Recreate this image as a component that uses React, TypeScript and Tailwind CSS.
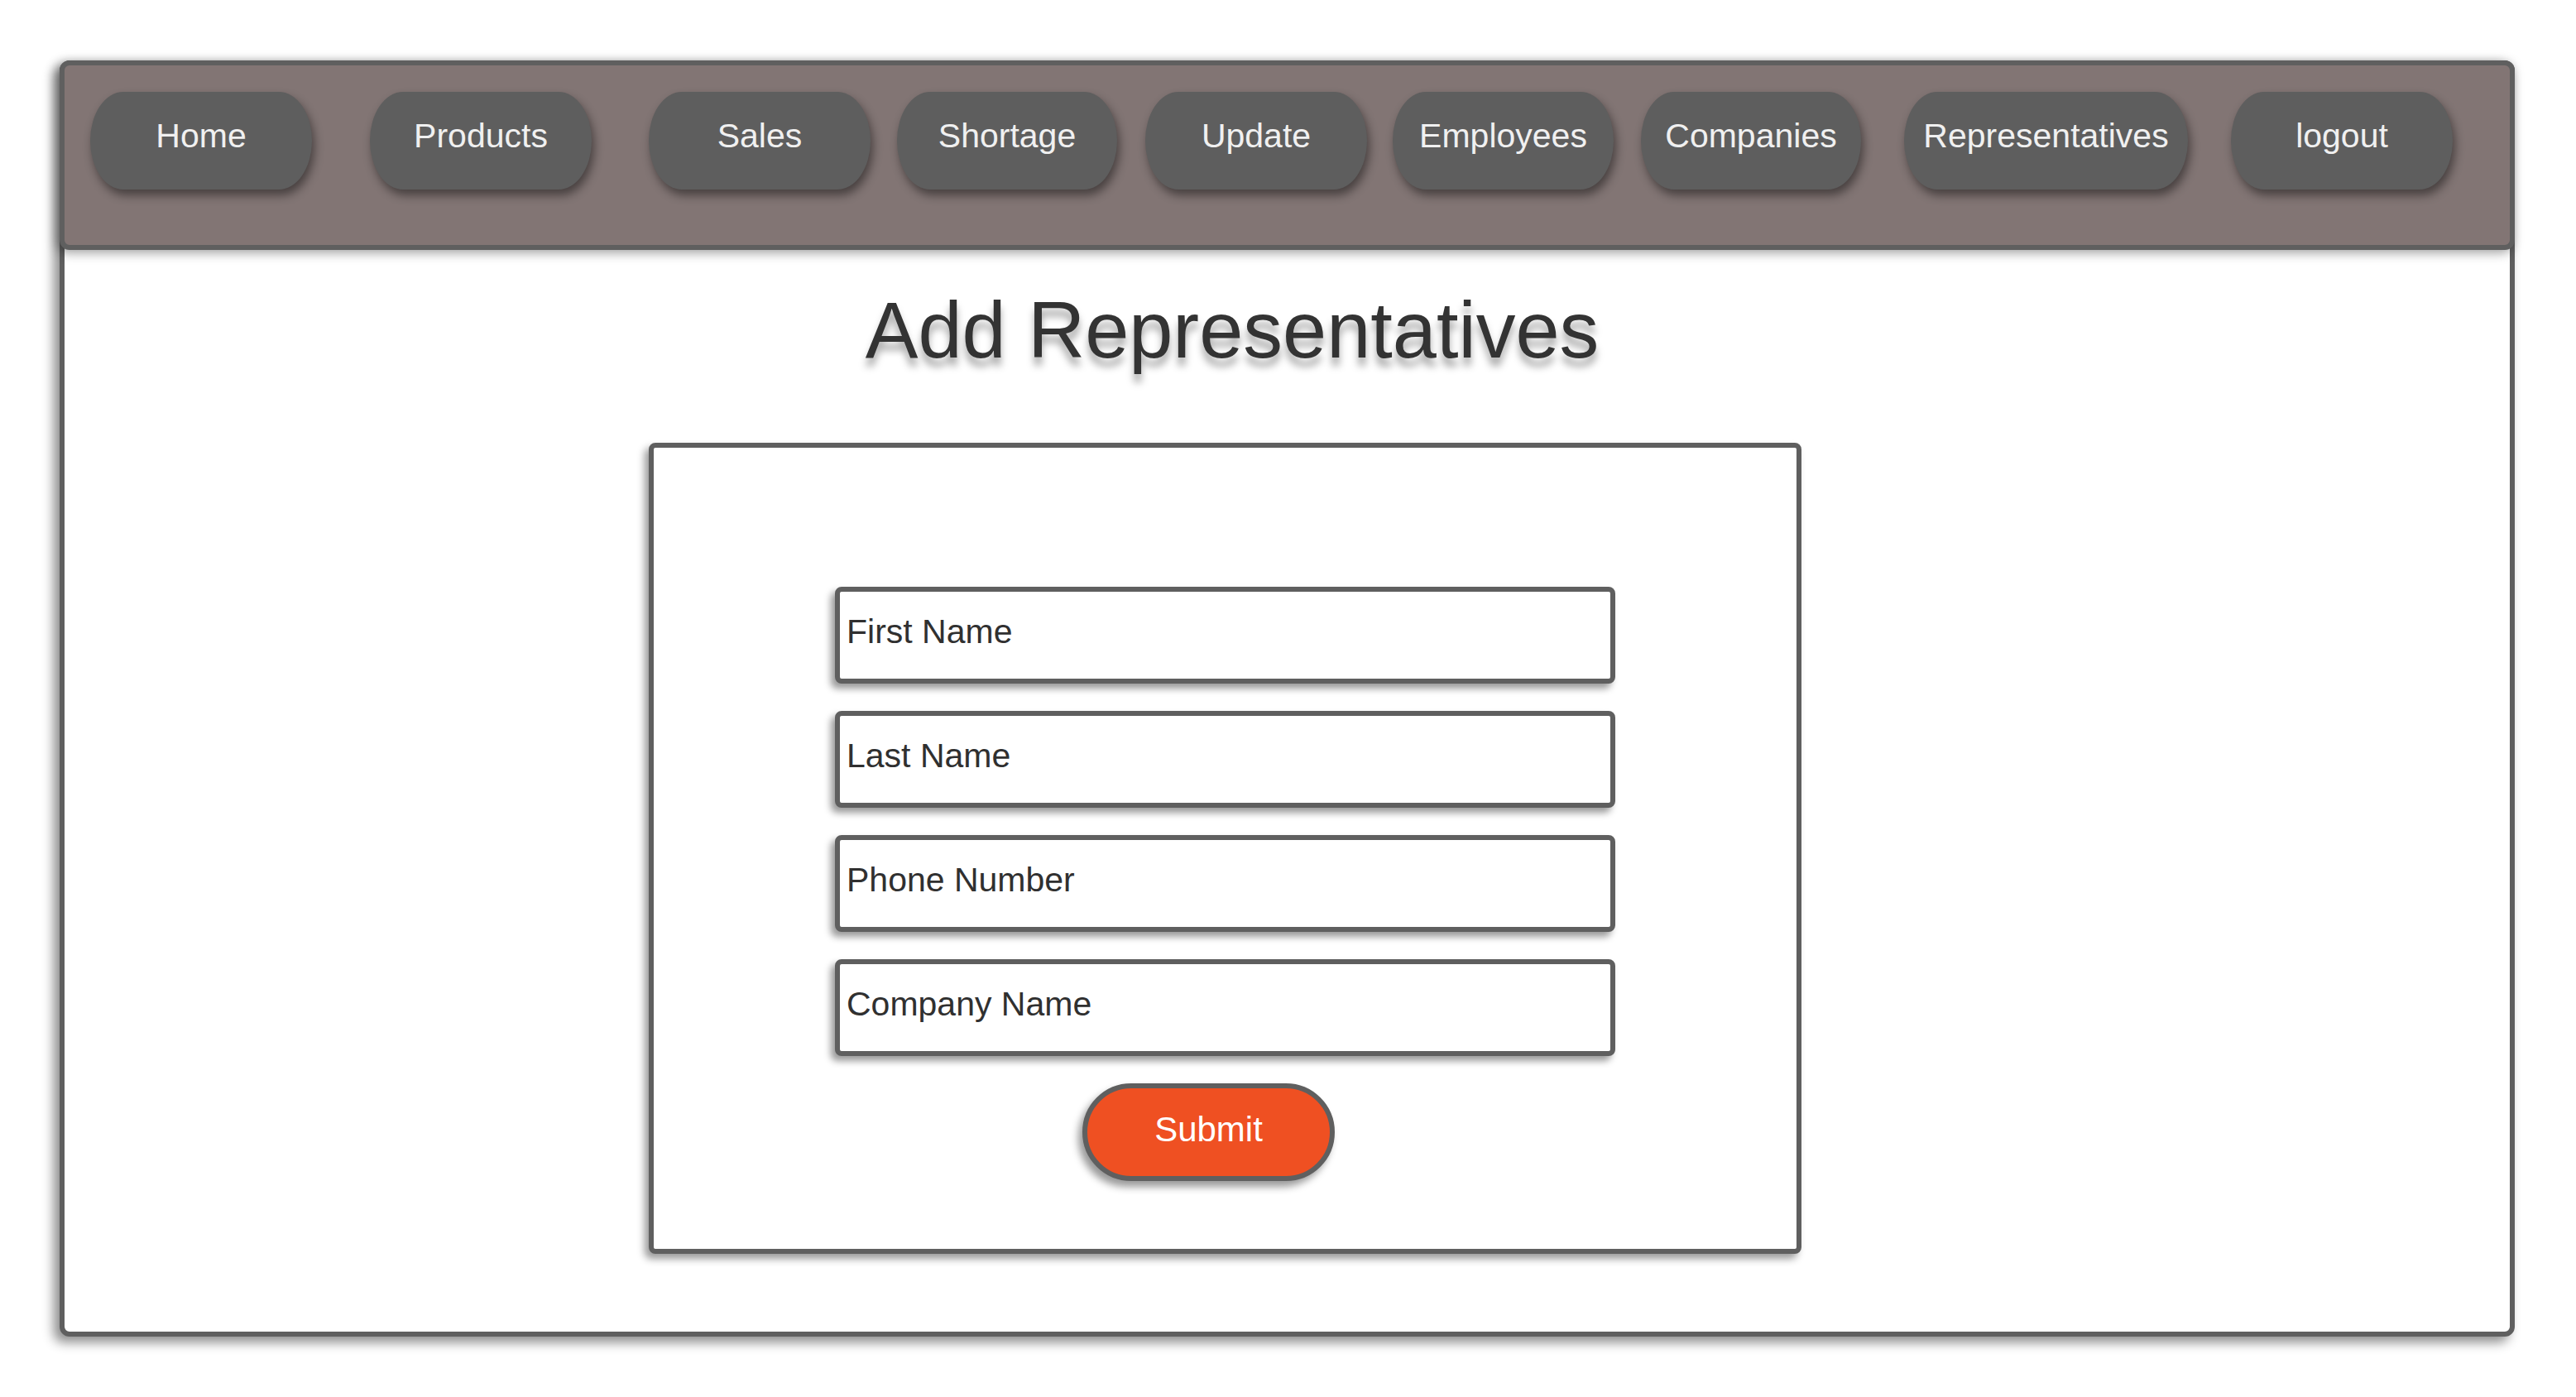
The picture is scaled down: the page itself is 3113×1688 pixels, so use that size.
import React from "react";

const navItems: { label: string; cls: string }[] = [
  { label: "Home", cls: "ml-[31px] w-[268px]" },
  { label: "Products", cls: "ml-[70px] w-[268px]" },
  { label: "Sales", cls: "ml-[69px] w-[268px]" },
  { label: "Shortage", cls: "ml-[32px] w-[266px]" },
  { label: "Update", cls: "ml-[34px] w-[268px]" },
  { label: "Employees", cls: "ml-[31px] w-[267px]" },
  { label: "Companies", cls: "ml-[33px] w-[266px]" },
  { label: "Representatives", cls: "ml-[52px] w-[343px]" },
  { label: "logout", cls: "ml-[52px] w-[268px]" },
];

const fields = ["First Name", "Last Name", "Phone Number", "Company Name"];

export default function App() {
  return (
    <div
      className="min-h-[1688px] w-full bg-white pl-[72px] pt-[73px]"
      style={{ fontFamily: '"Liberation Sans", Arial, sans-serif' }}
    >
      <div className="flex h-[1542px] w-[2967px] flex-col rounded-[12px] border-[6px] border-[#5f5f5f] bg-white shadow-[-7px_7px_14px_rgba(0,0,0,0.45)]">
        {/* Navbar */}
        <div className="-mx-[6px] -mt-[6px] flex h-[229px] items-start rounded-[12px] border-[6px] border-[#5f5f5f] bg-[#827574] pt-[32px] shadow-[-3px_3px_14px_rgba(0,0,0,0.4)]">
          {navItems.map((item) => (
            <div
              key={item.label}
              className={`${item.cls} flex h-[118px] shrink-0 items-center justify-center rounded-[40px/59px] bg-[#5e5e5e] pb-[10px] text-[41px] leading-[1.15] text-[#f0f0f0] shadow-[3px_7px_12px_rgba(0,0,0,0.45)]`}
            >
              {item.label}
            </div>
          ))}
        </div>

        {/* Content */}
        <div className="flex flex-col pl-[706px]">
          <div className="mt-[43px] w-[1393px] pl-[17px] text-center text-[95.5px] leading-[1.15] text-[#333333] [text-shadow:0_10px_10px_rgba(0,0,0,0.35)]">
            Add Representatives
          </div>

          <div className="mt-[80px] flex h-[980px] w-[1393px] flex-col items-center rounded-[8px] border-[6px] border-[#5f5f5f] bg-white pt-[168px] shadow-[-5px_6px_10px_rgba(0,0,0,0.4)]">
            <div className="flex flex-col gap-[33px]">
              {fields.map((f) => (
                <div
                  key={f}
                  className="flex h-[117px] w-[943px] items-center rounded-[8px] border-[6px] border-[#5f5f5f] bg-white pb-[8px] pl-[8px] text-[41px] leading-[1.15] text-[#303030] shadow-[-5px_6px_8px_rgba(0,0,0,0.4)]"
                >
                  {f}
                </div>
              ))}
            </div>
            <div className="mr-[40px] mt-[33px] flex h-[118px] w-[305px] items-center justify-center rounded-full border-[6px] border-[#5f5f5f] bg-[#ef5022] pb-[6px] text-[42px] leading-[1.15] text-white shadow-[-5px_7px_10px_rgba(0,0,0,0.4)]">
              Submit
            </div>
          </div>
        </div>
      </div>
    </div>
  );
}
